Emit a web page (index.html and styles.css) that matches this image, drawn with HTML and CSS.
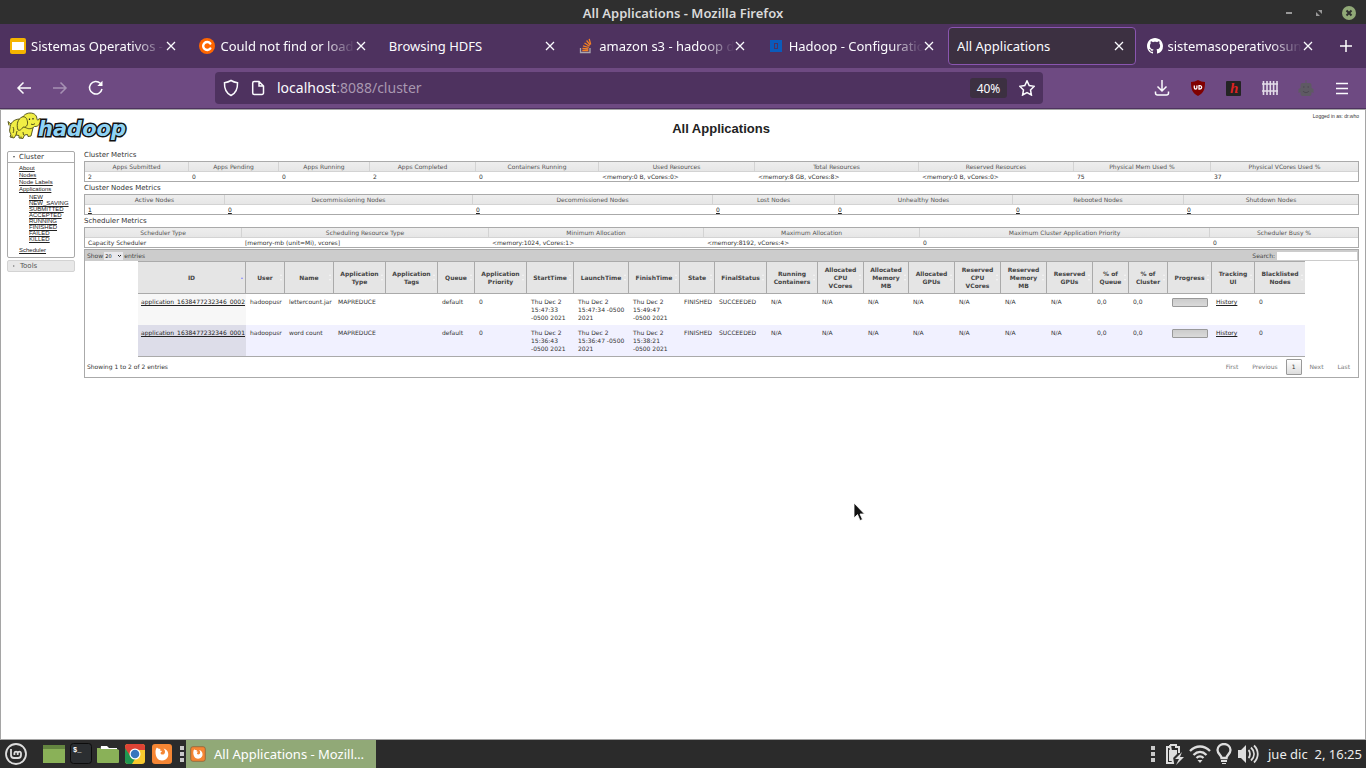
FILE: index.html
```html
<!DOCTYPE html>
<html lang="en">
<head>
<meta charset="utf-8">
<title>All Applications</title>
<link rel="stylesheet" href="styles.css">
</head>
<body class="desktop">

<header class="titlebar">
  <span class="titlebar-text">All Applications - Mozilla Firefox</span>
  <div class="window-buttons">
    <button aria-label="Minimize"><svg width="14" height="14"><path d="M4 6h6v2H4z" fill="#999"/></svg></button>
    <button aria-label="Restore"><svg width="14" height="14"><path d="M6 4h4v4zM4 6v4h4z" fill="#999"/></svg></button>
    <button aria-label="Close"><svg width="14" height="14"><circle cx="7" cy="7" r="7" fill="#91a977"/><path d="M4.500 4.500l5 5M9.500 4.500l-5 5" stroke="#2f2f2f" stroke-width="2"/></svg></button>
  </div>
</header>

<nav class="tabs" aria-label="Tabs">
  <div class="tab">
    <svg width="16" height="16"><rect width="16" height="16" rx="2" fill="#f5b400"/><rect x="2" y="4" width="12" height="8" fill="#fff"/></svg>
    <span class="tab-title fade">Sistemas Operativos -</span>
    <button class="tab-close" aria-label="Close tab"><svg width="10" height="10"><path d="M1 1l8 8M9 1l-8 8"/></svg></button>
  </div>
  <div class="tab">
    <svg width="16" height="16"><circle cx="8" cy="8" r="8" fill="#f60"/><path d="M11.300 5.500a4 4 0 1 0 0 5" fill="none" stroke="#fff" stroke-width="2.400" stroke-linecap="round"/></svg>
    <span class="tab-title fade">Could not find or load</span>
    <button class="tab-close" aria-label="Close tab"><svg width="10" height="10"><path d="M1 1l8 8M9 1l-8 8"/></svg></button>
  </div>
  <div class="tab">
    <span class="tab-title">Browsing HDFS</span>
    <button class="tab-close" aria-label="Close tab"><svg width="10" height="10"><path d="M1 1l8 8M9 1l-8 8"/></svg></button>
  </div>
  <div class="tab">
    <svg width="16" height="16" fill="none"><path d="M2.500 10v4.500h9.500V10" stroke="#aaa5ae" stroke-width="1.300"/><path d="M4.300 12.500h6M4.400 10.300l6 .7M5 7.800l5.800 1.700M6.500 5l5 3.200M8.600 2.500l3.600 4.700M11.200.8l1.500 5.600" stroke="#f48024" stroke-width="1.300"/></svg>
    <span class="tab-title fade">amazon s3 - hadoop di</span>
    <button class="tab-close" aria-label="Close tab"><svg width="10" height="10"><path d="M1 1l8 8M9 1l-8 8"/></svg></button>
  </div>
  <div class="tab">
    <svg width="16" height="16"><rect x="2" y="2" width="12" height="12" fill="#0b5bbb"/><rect x="6.500" y="5.500" width="3" height="5" fill="none" stroke="#4e325f"/></svg>
    <span class="tab-title fade">Hadoop - Configuratio</span>
    <button class="tab-close" aria-label="Close tab"><svg width="10" height="10"><path d="M1 1l8 8M9 1l-8 8"/></svg></button>
  </div>
  <div class="tab tab-active">
    <span class="tab-title">All Applications</span>
    <button class="tab-close" aria-label="Close tab"><svg width="10" height="10"><path d="M1 1l8 8M9 1l-8 8"/></svg></button>
  </div>
  <div class="tab">
    <svg width="16" height="16" viewBox="0 0 16 16"><path fill="#fff" d="M8 0C3.580 0 0 3.580 0 8c0 3.540 2.290 6.530 5.470 7.590.4.070.55-.17.55-.38 0-.19-.01-.82-.01-1.490-2.010.37-2.530-.49-2.690-.94-.09-.23-.48-.94-.82-1.130-.28-.15-.68-.52-.01-.53.63-.01 1.080.58 1.230.82.72 1.210 1.870.87 2.330.66.07-.52.28-.87.51-1.070-1.780-.2-3.640-.89-3.640-3.950 0-.87.31-1.590.82-2.150-.08-.2-.36-1.020.08-2.120 0 0 .67-.21 2.200.82.64-.18 1.320-.27 2-.27s1.360.09 2 .27c1.530-1.040 2.200-.82 2.200-.82.44 1.100.16 1.920.08 2.120.51.56.82 1.270.82 2.150 0 3.070-1.870 3.750-3.650 3.950.29.25.54.73.54 1.480 0 1.070-.01 1.930-.01 2.200 0 .21.15.46.55.38A8 8 0 0 0 16 8c0-4.420-3.580-8-8-8z"/></svg>
    <span class="tab-title fade">sistemasoperativosun</span>
    <button class="tab-close" aria-label="Close tab"><svg width="10" height="10"><path d="M1 1l8 8M9 1l-8 8"/></svg></button>
  </div>
  <button class="new-tab" aria-label="New tab"><svg width="12" height="12"><path d="M6 0v12M0 6h12" stroke="#fff" stroke-width="1.500"/></svg></button>
</nav>

<div class="toolbar">
  <button class="tool" aria-label="Back"><svg width="16" height="16"><path d="M15 8H2M7.500 2.500L2 8l5.500 5.500"/></svg></button>
  <button class="tool tool-off" aria-label="Forward"><svg width="16" height="16"><path d="M1 8h13M8.500 2.500L14 8l-5.500 5.500"/></svg></button>
  <button class="tool" aria-label="Reload"><svg width="16" height="16"><path d="M14 9A6.300 6.300 0 1 1 12.300 3.300"/><path d="M14.500.8V6H9.300z" fill="#fff" stroke="none"/></svg></button>
  <div class="urlbar">
    <svg width="16" height="18"><path d="M8 1.500c2 1.300 4 1.900 6.500 2.200C14.800 10 13 14 8 16.500 3 14 1.200 10 1.500 3.700 4 3.400 6 2.800 8 1.500z"/></svg>
    <svg width="14" height="16"><path d="M1.700 3a1.500 1.500 0 0 1 1.500-1.500H8l4.500 4.500v7a1.500 1.500 0 0 1-1.500 1.500H3.200A1.500 1.500 0 0 1 1.700 13zM8 1.500V6h4.500"/></svg>
    <a class="address" href="#">localhost<span>:8088/cluster</span></a>
    <button class="zoom-level">40%</button>
    <button class="star" aria-label="Bookmark"><svg width="16" height="16"><path d="M8 .9l2.200 4.700 5 .7-3.700 3.600.9 5.100L8 12.600 3.600 15l.9-5.100L.8 6.300l5-.7z"/></svg></button>
  </div>
  <button class="tool" aria-label="Downloads"><svg width="16" height="16"><path d="M8 0v10.500M3.500 6.500L8 11l4.500-4.500M1.500 11.500V13a2 2 0 0 0 2 2h9a2 2 0 0 0 2-2v-1.500"/></svg></button>
  <button class="tool" aria-label="Ad blocker"><svg width="16" height="16"><path d="M8 0c2 1.300 4.500 2 7 2 0 7-1 11-7 14C2 13 1 9 1 2c2.500 0 5-.7 7-2z" fill="#800000" stroke="none"/><path d="M4.300 5.500v2.200a1.300 1.300 0 0 0 2.600 0V5.500M9 5.700v3.300h1a1.600 1.600 0 0 0 0-3.300z" stroke-width="1.300"/></svg></button>
  <button class="tool" aria-label="Annotate"><svg width="16" height="16"><rect width="15" height="15" y="1" rx="1" fill="#242424" stroke="none"/><text x="4" y="13" class="ext-letter">h</text></svg></button>
  <button class="tool" aria-label="Containers"><svg width="16" height="16"><path d="M1.500 1v14M5 1v14M8.300 1v14M11.600 1v14M15 1v14M0 4h16M0 11h16" stroke="#e3dce9" stroke-width="1.600"/></svg></button>
  <button class="tool" aria-label="Robot"><svg width="16" height="16"><path d="M7.500 0h1v3h3a2 2 0 0 1 2 2v3l2 1v4l-2-1v2a2 2 0 0 1-2 2h-7a2 2 0 0 1-2-2v-2l-2 1V9l2-1V5a2 2 0 0 1 2-2h3z" fill="#5e5a63" stroke="none"/><path d="M5 7h1.500M9.500 7H11M5 11c1.500 2 4.500 2 6 0" stroke="#4b4550" stroke-width="1"/></svg></button>
  <button class="tool" aria-label="Menu"><svg width="14" height="14"><path d="M1 2.500h12M1 7.500h12M1 12.500h12"/></svg></button>
</div>

<main class="page">
  <div class="page-head">
    <svg class="logo" width="120" height="32" role="img" aria-label="hadoop">
      <g stroke="#4a4a18" stroke-width=".9" fill="#f1ee45" stroke-linejoin="round">
        <path d="M4 12L1 9.500l1 4"/>
        <path d="M13 7C7 7 3 11 3 16c-1 3 0 5 1 6l-1 3 4 1 2-3 3 .5v2.500l4 .5 1.500-3.500 3-.5.5 2 3-.5 2-8V9z"/>
        <path d="M15 8c0-4 4-7 8-7 5 0 7 3 7 6.500 1 1 2 .5 1.500-.5l2-.5c.5 4-1.500 8.500-6 8-2 2-5 3-8 1.500C16 15 15 12 15 8z"/>
        <path d="M15 5c-4 2-6 7-4 13 2 1 4-1 5-3 3 1 5-2 4.500-5C20 6 18 4 15 5z"/>
        <path d="M6 15c1 2 1 4 0 6M9 23l1-4M16.500 23l-.5-3M5 25v-1.500M14 26v-1.500" fill="none"/>
      </g>
      <path d="M22.500 6.500v1.500M26 6v1.500" stroke="#222" stroke-width="1.200"/><path d="M24 12c1.500 1 3 .5 4-.5" fill="none" stroke="#4a4a18"/>
      <text x="31" y="24" class="logo-text">hadoop</text>
    </svg>
    <h1>All Applications</h1>
    <p class="login">Logged in as: dr.who</p>
  </div>

  <div class="page-body">
    <nav class="sidebar" aria-label="Cluster">
      <section class="panel">
        <h2 class="panel-head"><i class="caret"></i>Cluster</h2>
        <ul class="links">
          <li><a href="#">About</a></li>
          <li><a href="#">Nodes</a></li>
          <li><a href="#">Node Labels</a></li>
          <li><a href="#">Applications</a>
            <ul class="sublinks">
              <li><a href="#">NEW</a></li>
              <li><a href="#">NEW_SAVING</a></li>
              <li><a href="#">SUBMITTED</a></li>
              <li><a href="#">ACCEPTED</a></li>
              <li><a href="#">RUNNING</a></li>
              <li><a href="#">FINISHED</a></li>
              <li><a href="#">FAILED</a></li>
              <li><a href="#">KILLED</a></li>
            </ul>
          </li>
          <li><a href="#">Scheduler</a></li>
        </ul>
      </section>
      <section class="panel panel-closed">
        <h2 class="panel-head"><i class="caret"></i>Tools</h2>
      </section>
    </nav>

    <div class="content">
      <h3>Cluster Metrics</h3>
      <table class="metrics metrics-cluster">
        <thead><tr><th>Apps Submitted</th><th>Apps Pending</th><th>Apps Running</th><th>Apps Completed</th><th>Containers Running</th><th>Used Resources</th><th>Total Resources</th><th>Reserved Resources</th><th>Physical Mem Used %</th><th>Physical VCores Used %</th></tr></thead>
        <tbody><tr><td>2</td><td>0</td><td>0</td><td>2</td><td>0</td><td>&lt;memory:0 B, vCores:0&gt;</td><td>&lt;memory:8 GB, vCores:8&gt;</td><td>&lt;memory:0 B, vCores:0&gt;</td><td>75</td><td>37</td></tr></tbody>
      </table>
      <h3>Cluster Nodes Metrics</h3>
      <table class="metrics metrics-nodes">
        <thead><tr><th>Active Nodes</th><th>Decommissioning Nodes</th><th>Decommissioned Nodes</th><th>Lost Nodes</th><th>Unhealthy Nodes</th><th>Rebooted Nodes</th><th>Shutdown Nodes</th></tr></thead>
        <tbody><tr><td><a href="#">1</a></td><td><a href="#">0</a></td><td><a href="#">0</a></td><td><a href="#">0</a></td><td><a href="#">0</a></td><td><a href="#">0</a></td><td><a href="#">0</a></td></tr></tbody>
      </table>
      <h3>Scheduler Metrics</h3>
      <table class="metrics metrics-scheduler">
        <thead><tr><th>Scheduler Type</th><th>Scheduling Resource Type</th><th>Minimum Allocation</th><th>Maximum Allocation</th><th>Maximum Cluster Application Priority</th><th>Scheduler Busy %</th></tr></thead>
        <tbody><tr><td>Capacity Scheduler</td><td>[memory-mb (unit=Mi), vcores]</td><td>&lt;memory:1024, vCores:1&gt;</td><td>&lt;memory:8192, vCores:4&gt;</td><td>0</td><td>0</td></tr></tbody>
      </table>

      <section class="apps">
        <div class="apps-bar">
          <label class="show">Show <span class="select-wrap"><select><option>20</option></select><svg width="5" height="4"><path d="M1 1l1.500 1.500L4 1" fill="none" stroke="#222"/></svg></span> entries</label>
          <label class="search">Search: <input type="text"></label>
        </div>
        <div class="apps-scroll">
          <table class="apps-table">
            <thead><tr><th class="sorted">ID</th><th>User</th><th>Name</th><th>Application Type</th><th>Application Tags</th><th>Queue</th><th>Application Priority</th><th>StartTime</th><th>LaunchTime</th><th>FinishTime</th><th>State</th><th>FinalStatus</th><th>Running Containers</th><th>Allocated CPU VCores</th><th>Allocated Memory MB</th><th>Allocated GPUs</th><th>Reserved CPU VCores</th><th>Reserved Memory MB</th><th>Reserved GPUs</th><th>% of Queue</th><th>% of Cluster</th><th>Progress</th><th>Tracking UI</th><th>Blacklisted Nodes</th></tr></thead>
            <tbody>
              <tr><td><a href="#">application_1638477232346_0002</a></td><td>hadoopusr</td><td>lettercount.jar</td><td>MAPREDUCE</td><td></td><td>default</td><td>0</td><td>Thu Dec 2<br>15:47:33<br>-0500 2021</td><td>Thu Dec 2<br>15:47:34 -0500<br>2021</td><td>Thu Dec 2<br>15:49:47<br>-0500 2021</td><td>FINISHED</td><td>SUCCEEDED</td><td>N/A</td><td>N/A</td><td>N/A</td><td>N/A</td><td>N/A</td><td>N/A</td><td>N/A</td><td>0,0</td><td>0,0</td><td><div class="bar"></div></td><td><a href="#">History</a></td><td>0</td></tr>
              <tr><td><a href="#">application_1638477232346_0001</a></td><td>hadoopusr</td><td>word count</td><td>MAPREDUCE</td><td></td><td>default</td><td>0</td><td>Thu Dec 2<br>15:36:43<br>-0500 2021</td><td>Thu Dec 2<br>15:36:47 -0500<br>2021</td><td>Thu Dec 2<br>15:38:21<br>-0500 2021</td><td>FINISHED</td><td>SUCCEEDED</td><td>N/A</td><td>N/A</td><td>N/A</td><td>N/A</td><td>N/A</td><td>N/A</td><td>N/A</td><td>0,0</td><td>0,0</td><td><div class="bar"></div></td><td><a href="#">History</a></td><td>0</td></tr>
            </tbody>
          </table>
        </div>
        <div class="apps-foot">
          <span>Showing 1 to 2 of 2 entries</span>
          <div class="pager"><button>First</button><button>Previous</button><button class="current">1</button><button>Next</button><button>Last</button></div>
        </div>
      </section>
    </div>
  </div>
</main>

<footer class="taskbar">
  <button class="task-icon mint" aria-label="Menu"><svg width="22" height="22" fill="none" stroke="#ddd"><circle cx="11" cy="11" r="10" stroke-width="1.800"/><path d="M6 6v6a3 3 0 0 0 3 3h4a3 3 0 0 0 3-3v-2a1.700 1.700 0 0 0-3.300 0v2M12.700 12v-2a1.700 1.700 0 0 0-3.300 0v2" stroke-width="1.800"/></svg></button>
  <button class="task-icon" aria-label="Show desktop"><svg width="22" height="22"><rect y="2" width="22" height="18" fill="#8ab158"/><rect y="2" width="22" height="4" fill="#648540"/></svg></button>
  <button class="task-icon" aria-label="Terminal"><svg width="22" height="22"><rect x=".5" y=".5" width="21" height="20" rx="3" fill="#2b2e31" stroke="#0c0c0c"/><text x="3" y="9" class="term-text">$_</text></svg></button>
  <button class="task-icon" aria-label="Files"><svg width="22" height="22"><path d="M4 3h6l2 2h8v5H3z" fill="#fff"/><path d="M0 5h3l1 1h16l2 1v12a1 1 0 0 1-1 1H1a1 1 0 0 1-1-1z" fill="#8ab158"/></svg></button>
  <button class="task-icon" aria-label="Chrome"><svg width="22" height="22"><rect x="1" y="1" width="20" height="20" rx="3" fill="#f9ca2e"/><path d="M1 4a3 3 0 0 1 3-3h14a3 3 0 0 1 3 3v3H11L6 13 1 6z" fill="#df4335"/><path d="M1 5l6 9 4 2-3 5H4a3 3 0 0 1-3-3z" fill="#219750"/><circle cx="11" cy="11" r="5.500" fill="#fff"/><circle cx="11" cy="11" r="4.300" fill="#3976bd"/></svg></button>
  <button class="task-icon" aria-label="Firefox"><svg width="22" height="22" viewBox="0 0 22 22"><rect x="1" y="1" width="20" height="20" rx="3" fill="#f58634"/><path d="M4.500 9c0-2 .5-3.500 1.500-4.500.5 1 1.500 1 3.500 1.500l-.5 1.500 2 .5c0 1-1.500 1-1.500 2 .5 2.500 4.500 2 4.500-1 0-1.500-.5-2.500-1.500-3.500 4 1 5.500 4.500 4.500 8C16 16 13.500 17.500 11 17.500 7 17.500 4.500 14 4.500 9z" fill="#fff"/></svg></button>
  <svg class="dots" width="4" height="18"><path d="M0 1h4v4H0zM0 7h4v4H0zM0 13h4v4H0z" fill="#c9c9c9"/></svg>
  <button class="task-window">
    <svg width="16" height="16" viewBox="0 0 22 22"><rect x="1" y="1" width="20" height="20" rx="3" fill="#f58634" stroke="#8b5a32"/><path d="M4.500 9c0-2 .5-3.500 1.500-4.500.5 1 1.500 1 3.500 1.500l-.5 1.500 2 .5c0 1-1.500 1-1.500 2 .5 2.500 4.500 2 4.500-1 0-1.500-.5-2.500-1.500-3.500 4 1 5.500 4.500 4.500 8C16 16 13.500 17.500 11 17.500 7 17.500 4.500 14 4.500 9z" fill="#fff"/></svg>
    <span>All Applications - Mozill…</span>
  </button>
  <div class="tray">
    <svg class="tray-dots" width="4" height="18"><path d="M0 1h4v4H0zM0 7h4v4H0zM0 13h4v4H0z" fill="#c9c9c9"/></svg>
    <svg width="20" height="22"><path d="M6 2h6v2h3v6M9 20H3V4h3V2z" fill="none" stroke="#ddd" stroke-width="2"/><path d="M5 7h8v4l-5 5v2H5z" fill="#ddd"/><path d="M18 9l-7 7h4l-3 6 8-8h-4z" fill="#ddd"/></svg>
    <svg width="22" height="20" fill="none" stroke="#ddd" stroke-width="2.300"><path d="M1 7c6-6 14-6 20 0M4.500 11c4-4 9-4 13 0M7.500 14c2-2 5-2 7 0"/><path d="M8.500 16h5L11 19z" fill="#ddd" stroke="none"/></svg>
    <svg width="16" height="22"><path d="M5.500 15c0-3-4-4-4-8a6.500 6 0 0 1 13 0c0 4-4 5-4 8z" fill="none" stroke="#ddd" stroke-width="2.300"/><path d="M5 17h6v2H5zM6 20h4v1H6z" fill="#ddd"/></svg>
    <svg width="22" height="20"><path d="M1 6h3l5-5v18l-5-5H1z" fill="#ddd"/><path d="M11.500 6c2 2 2 6 0 8M14 3.500c4 4 4 9 0 13M17 1.500c5 5 5 12 0 17" fill="none" stroke="#ddd" stroke-width="1.800"/></svg>
    <time>jue dic&nbsp; 2, 16:25</time>
  </div>
</footer>

<svg class="pointer" width="12" height="20"><path d="M1 1v15l3.500-3.500L7 18.500l2.500-1L7 12h4.500z" fill="#111" stroke="#fff" stroke-width=".8"/></svg>
</body>
</html>
```
FILE: styles.css
```css
* { box-sizing: border-box; }

.desktop {
  margin: 0;
  min-height: 100vh;
  display: flex;
  flex-direction: column;
  background: #fff;
  color: #333;
  font-family: "Noto Sans", "Open Sans", sans-serif;
  font-size: 13px;
}

button {
  border: 0;
  padding: 0;
  background: none;
  color: inherit;
  font: inherit;
  display: flex;
  align-items: center;
  justify-content: center;
}
svg { display: block; flex: none; }

/* window title */
.titlebar {
  height: 24px;
  display: grid;
  grid-template-columns: 1fr auto 1fr;
  align-items: center;
  background: #2f2f2f;
  color: #dadada;
}
.titlebar-text { grid-column: 2; font-weight: 600; line-height: 24px; padding-top: 1px; }
.window-buttons { justify-self: end; display: flex; gap: 16px; padding-right: 10px; }

/* tab strip */
.tabs { height: 44px; display: flex; padding: 3px 0 3px 1px; gap: 2px; background: #4e325f; color: #fbfbfe; }
.tab {
  flex: 1 1 0;
  min-width: 0;
  display: flex;
  align-items: center;
  gap: 5px;
  padding: 0 11px 0 8px;
  border: 1px solid transparent;
  border-radius: 4px;
}
.tab-active { background: #3c3041; border-color: #8a55b0; }
.tab-title { flex: 1; min-width: 0; margin-right: -4px; overflow: hidden; white-space: nowrap; line-height: 20px; }
.fade { -webkit-mask-image: linear-gradient(to left, transparent, #000 32px); mask-image: linear-gradient(to left, transparent, #000 32px); }
.tab-close { stroke: #fbfbfe; stroke-width: 1.3px; }
.new-tab { width: 39px; }

/* navigation bar */
.toolbar {
  height: 41px;
  display: flex;
  align-items: center;
  padding: 0 6px;
  background: #6e4a82;
  border-bottom: 1px solid #4e325f;
}
.tool { width: 36px; height: 36px; }
.tool svg, .urlbar svg { fill: none; stroke: #fbfbfe; stroke-width: 1.5px; }
.tool-off { opacity: .4; }
.urlbar {
  flex: 1;
  height: 32px;
  margin: 0 101px;
  padding: 0 8px;
  display: flex;
  align-items: center;
  gap: 12px;
  border-radius: 4px;
  background: #4e325f;
}
.address { flex: 1; color: #fbfbfe; font-size: 14px; line-height: 20px; text-decoration: none; }
.address span { color: #a898b0; }
.zoom-level { width: 37px; height: 20px; border-radius: 3px; background: #3c3041; color: #fbfbfe; font-size: 12px; }
.tool .ext-letter { font: italic bold 15px "Liberation Serif", serif; fill: #d22; stroke: none; }

/* cluster page */
.page {
  flex: 1;
  border: 1px solid #a5a5a5;
  padding: 0 6px;
  font-family: "DejaVu Sans", sans-serif;
  font-size: 6px;
  line-height: 8px;
}
.page a { color: #222; text-decoration: underline; }
.page-head { height: 39px; display: grid; grid-template-columns: 76px 1fr; }
.logo { grid-area: 1 / 1; margin-top: 2px; overflow: visible; }
.logo-text {
  font: italic bold 21px "DejaVu Sans", sans-serif;
  fill: #8fd3f5;
  stroke: #111;
  stroke-width: 3px;
  paint-order: stroke;
}
.page-head h1 {
  grid-area: 1 / 2;
  margin: 0;
  text-align: center;
  font: bold 13px/37px "Liberation Sans", sans-serif;
  color: #222;
}
.login { grid-area: 1 / 2; justify-self: end; margin: 2px 0 0; font: 5px/8px "Liberation Sans", sans-serif; }

.page-body { display: grid; grid-template-columns: 68px 1fr; column-gap: 9px; }
.sidebar { padding-top: 2px; }
.panel { border: 1px solid #aaa; border-radius: 2px; margin-bottom: 2px; }
.panel-head {
  display: flex;
  align-items: center;
  gap: 4px;
  margin: 0;
  padding-left: 5px;
  font-size: 7px;
  font-weight: normal;
  line-height: 10px;
  border-bottom: 1px solid #aaa;
}
.caret { border: 1px solid transparent; border-top: 2px solid #555; }
.panel-closed { border-color: #d3d3d3; background: #e8e8e8; color: #555; }
.panel-closed .panel-head { border: 0; }
.panel-closed .caret { border: 1px solid transparent; border-left: 2px solid #888; }
.links, .sublinks { list-style: none; margin: 0; padding: 0; }
.links { padding: 2px 0 3px 11px; font: 6px/7px "Liberation Sans", sans-serif; }
.sublinks { padding: 1px 0 5px 10px; line-height: 6px; }

.content h3 { margin: 0; padding-top: 1px; font-size: 7px; line-height: 11px; font-weight: normal; }
.metrics { width: 100%; table-layout: fixed; border-spacing: 0; border: 1px solid #aaa; }
.metrics th {
  height: 10px;
  padding: 0;
  line-height: 9px;
  border-right: 1px solid #d3d3d3;
  border-bottom: 1px solid #d3d3d3;
  background: linear-gradient(#eee, #e6e6e6);
  color: #555;
  font-weight: normal;
}
.metrics th:last-child { border-right: 0; }
.metrics td { height: 9px; padding: 0 3px; line-height: 9px; }

.metrics-cluster th:nth-child(1) { width: 104px; }
.metrics-cluster th:nth-child(2) { width: 90px; }
.metrics-cluster th:nth-child(3) { width: 91px; }
.metrics-cluster th:nth-child(4) { width: 106px; }
.metrics-cluster th:nth-child(5) { width: 123px; }
.metrics-cluster th:nth-child(6) { width: 156px; }
.metrics-cluster th:nth-child(7) { width: 164px; }
.metrics-cluster th:nth-child(8) { width: 155px; }
.metrics-cluster th:nth-child(9) { width: 137px; }
.metrics-nodes th:nth-child(1) { width: 140px; }
.metrics-nodes th:nth-child(2) { width: 248px; }
.metrics-nodes th:nth-child(3) { width: 240px; }
.metrics-nodes th:nth-child(4) { width: 122px; }
.metrics-nodes th:nth-child(5) { width: 178px; }
.metrics-nodes th:nth-child(6) { width: 171px; }
.metrics-scheduler th:nth-child(1) { width: 157px; }
.metrics-scheduler th:nth-child(2) { width: 247px; }
.metrics-scheduler th:nth-child(3) { width: 215px; }
.metrics-scheduler th:nth-child(4) { width: 216px; }
.metrics-scheduler th:nth-child(5) { width: 290px; }

/* applications list */
.apps { margin-top: 1px; border: 1px solid #aaa; }
.apps-bar { display: flex; justify-content: space-between; align-items: center; height: 11px; padding: 0 1px 0 2px; background: #ccc; color: #444; }
.show, .search, .select-wrap { display: flex; align-items: center; gap: 2px; }
.show { gap: 1px; }
.select-wrap { background: #e9e9ed; padding-right: 1px; }
.show select { appearance: none; width: 11px; height: 8px; border: 0; padding: 0 1px; background: none; color: #111; font: 5px/8px "DejaVu Sans", sans-serif; }
.search input { width: 80px; height: 8px; border: 0; padding: 0 1px; background: #fff; font: inherit; }
.apps-scroll { padding: 0 53px; }
.apps-table { width: 100%; table-layout: fixed; border-spacing: 0; border-bottom: 1px solid #aaa; }
.apps-table th {
  position: relative;
  height: 33px;
  padding: 0 3px;
  background: #e5e5e5;
  border: solid #aaa;
  border-width: 1px 1px 1px 0;
  color: #444;
}
.apps-table th:last-child { border-right: 0; }
.apps-table th::before, .apps-table th::after { content: ""; position: absolute; right: 2px; border: 1px solid transparent; }
.apps-table th::before { bottom: 17px; border-bottom: 2px solid #f6f6f6; }
.apps-table th::after { top: 17px; border-top: 2px solid #f6f6f6; }
.apps-table .sorted::before { bottom: 14px; border-bottom-color: #88f; }
.apps-table .sorted::after { border: 0; }
.apps-table td { height: 31px; padding: 4px 0 3px 4px; vertical-align: top; white-space: nowrap; }
.apps-table td:first-child { padding-left: 3px; background: #f7f7f7; }
.apps-table tr:nth-child(2) td { background: #f1f1ff; }
.apps-table tr:nth-child(2) td:first-child { background: #dddde9; }
.bar { width: 36px; height: 9px; border: 1px solid #999; border-radius: 1px; background: linear-gradient(#ccc, #dadada); }

.apps-table th:nth-child(1) { width: 108px; }
.apps-table th:nth-child(2) { width: 39px; }
.apps-table th:nth-child(3) { width: 49px; }
.apps-table th:nth-child(4), .apps-table th:nth-child(5), .apps-table th:nth-child(7), .apps-table th:nth-child(12) { width: 52px; }
.apps-table th:nth-child(6) { width: 37px; }
.apps-table th:nth-child(8) { width: 47px; }
.apps-table th:nth-child(9) { width: 55px; }
.apps-table th:nth-child(10), .apps-table th:nth-child(13) { width: 51px; }
.apps-table th:nth-child(11) { width: 35px; }
.apps-table th:nth-child(14), .apps-table th:nth-child(16), .apps-table th:nth-child(17), .apps-table th:nth-child(18), .apps-table th:nth-child(19) { width: 46px; }
.apps-table th:nth-child(15) { width: 45px; }
.apps-table th:nth-child(20) { width: 36px; }
.apps-table th:nth-child(21) { width: 39px; }
.apps-table th:nth-child(22) { width: 44px; }
.apps-table th:nth-child(23) { width: 43px; }
.apps-table th:nth-child(24) { width: 50px; }

.apps-foot { display: flex; justify-content: space-between; align-items: center; height: 20px; padding: 0 1px 0 2px; }
.pager { display: flex; color: #777; }
.pager button { height: 16px; margin: 0 1px; padding: 0 5px; border: 1px solid transparent; }
.pager .current { border-color: #999; border-radius: 1px; background: linear-gradient(#fff, #ddd); color: #333; }

/* panel at the bottom of the desktop */
.taskbar { height: 28px; display: flex; align-items: center; padding-left: 2px; background: #2b2b2b; color: #ececec; }
.task-icon { width: 27px; height: 28px; }
.mint { margin-right: 11px; }
.dots { margin: 0 2px 0 5px; }
.task-window { height: 28px; width: 190px; gap: 8px; padding: 0 4px; background: #91a977; color: #fff; justify-content: flex-start; white-space: nowrap; }
.term-text { font: bold 7px "Liberation Mono", monospace; fill: #fff; }
.tray { margin-left: auto; display: flex; align-items: center; gap: 5px; padding-right: 4px; }
.tray-dots { margin-right: 4px; }
.tray time { margin-left: 4px; }

.pointer { position: absolute; left: 853px; top: 502px; }
```
